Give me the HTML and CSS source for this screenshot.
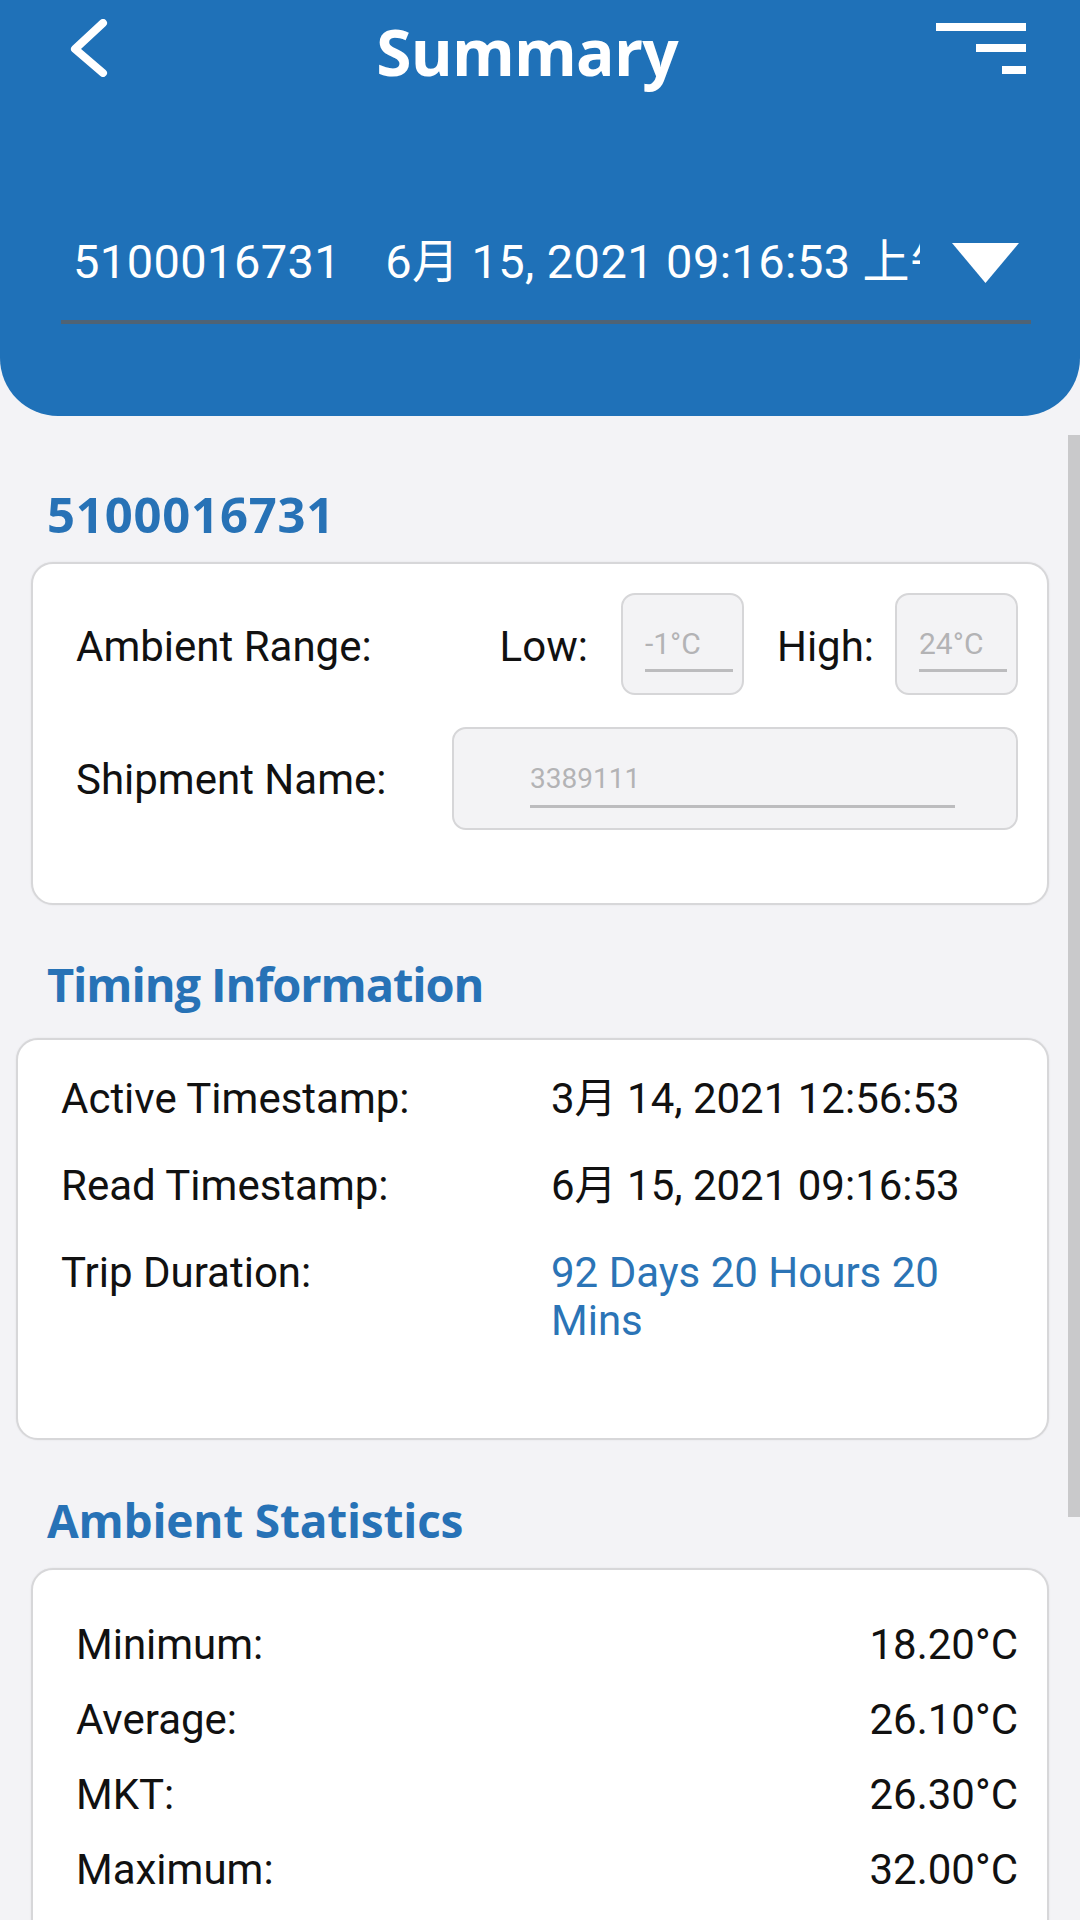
FILE: index.html
```html
<!DOCTYPE html>
<html lang="en">
<head>
<meta charset="utf-8">
<title>Summary</title>
<link rel="stylesheet" href="styles.css">
</head>
<body>
<div class="screen">
  <header class="header">
    <div class="topbar">
      <svg class="back" width="40" height="58" viewBox="0 0 40 58" aria-label="Back">
        <polyline points="33,4 5,30 33,54" fill="none" stroke="#fff" stroke-width="8" stroke-linecap="round" stroke-linejoin="round"/>
      </svg>
      <h1 class="title">Summary</h1>
      <svg class="menu" width="90" height="51" viewBox="0 0 90 51" aria-label="Menu">
        <rect x="0" y="0" width="90" height="8" fill="#fff"/>
        <rect x="40" y="21" width="50" height="8" fill="#fff"/>
        <rect x="66" y="43" width="24" height="8" fill="#fff"/>
      </svg>
    </div>
    <div class="picker">
      <div class="picker-text"><span class="picker-id">5100016731</span><span class="picker-date">6月 15, 2021 09:16:53 上午</span></div>
      <svg class="caret" width="67" height="40" viewBox="0 0 67 40"><polygon points="0,0 67,0 33.5,40" fill="#fff"/></svg>
    </div>
  </header>

  <main class="content">
    <h2 class="section-title first">5100016731</h2>
    <section class="card card-settings">
      <div class="range-row">
        <span class="label range-label">Ambient Range:</span>
        <span class="label low-label">Low:</span>
        <div class="box small"><div class="field">-1°C</div></div>
        <span class="label high-label">High:</span>
        <div class="box small"><div class="field">24°C</div></div>
      </div>
      <div class="name-row">
        <span class="label name-label">Shipment Name:</span>
        <div class="box wide"><div class="field">3389111</div></div>
      </div>
    </section>

    <h2 class="section-title second">Timing Information</h2>
    <section class="card card-timing">
      <span class="label">Active Timestamp:</span><span class="value">3月 14, 2021 12:56:53</span>
      <span class="label">Read Timestamp:</span><span class="value">6月 15, 2021 09:16:53</span>
      <span class="label">Trip Duration:</span><span class="value accent">92 Days 20 Hours 20 Mins</span>
    </section>

    <h2 class="section-title third">Ambient Statistics</h2>
    <section class="card card-stats">
      <div class="stat"><span class="label">Minimum:</span><span class="value">18.20°C</span></div>
      <div class="stat"><span class="label">Average:</span><span class="value">26.10°C</span></div>
      <div class="stat"><span class="label">MKT:</span><span class="value">26.30°C</span></div>
      <div class="stat"><span class="label">Maximum:</span><span class="value">32.00°C</span></div>
    </section>
  </main>
  <div class="scrollbar"></div>
</div>
</body>
</html>
```

FILE: styles.css
```css
* { box-sizing: border-box; }
html, body {
  margin: 0;
  padding: 0;
  overflow: hidden;
  background: #f3f3f6;
}
body {
  font-family: Roboto, "Noto Sans CJK SC", sans-serif;
  color: #111;
}
.screen {
  position: relative;
  width: 1080px;
  height: 1920px;
  overflow: hidden;
  background: #f3f3f6;
}

/* Header */
.header {
  height: 416px;
  background: #1f71b8;
  border-radius: 0 0 58px 58px;
  padding-top: 19px;
}
.topbar {
  display: flex;
  align-items: flex-start;
  height: 65px;
}
.back {
  display: block;
  margin-left: 70px;
  flex: none;
}
.title {
  flex: 1;
  margin: 1px 0 0;
  padding-left: 8px;
  text-align: center;
  font-family: "Open Sans", sans-serif;
  font-weight: 700;
  font-size: 64px;
  line-height: 64px;
  color: #fff;
  letter-spacing: -0.8px;
}
.menu {
  display: block;
  flex: none;
  margin: 4px 54px 0 0;
}
.picker {
  display: flex;
  align-items: center;
  margin: 150px 49px 0 61px;
  padding: 0 12px 30px 12px;
  border-bottom: 4px solid #4f6375;
}
.picker-text {
  flex: 1;
  overflow: hidden;
  white-space: nowrap;
  font-size: 47px;
  line-height: 56px;
  letter-spacing: 0.4px;
  color: #fff;
}
.picker-date {
  margin-left: 44px;
}
.caret {
  display: block;
  flex: none;
  margin-left: 32px;
  margin-top: 2px;
}

/* Content */
.content {
  padding: 0 31px;
}
.section-title {
  margin: 0;
  padding-left: 16px;
  font-family: "Open Sans", sans-serif;
  font-weight: 700;
  font-size: 47px;
  line-height: 47px;
  color: #2772b6;
}
.section-title.first { margin-top: 75px; margin-bottom: 24px; font-size: 49px; letter-spacing: 0.8px; }
.section-title.second { margin-top: 56px; margin-bottom: 30px; letter-spacing: -1.1px; }
.section-title.third { margin-top: 57px; margin-bottom: 24px; font-size: 46px; letter-spacing: -0.2px; }

.card {
  background: #fff;
  border: 2px solid #d7d7d9;
  border-radius: 22px;
  box-shadow: 0 0 2px rgba(0, 0, 0, 0.08);
}
.label, .value {
  font-size: 42px;
  line-height: 48px;
}

/* Card 1 */
.card-settings {
  height: 343px;
  padding: 29px 29px 0 43px;
}
.range-row {
  display: flex;
  align-items: center;
  height: 102px;
}
.range-label { flex: 1; padding-top: 5px; }
.low-label { margin-right: 33px; padding-top: 5px; }
.high-label { margin: 0 21px 0 33px; padding-top: 5px; }
.name-row {
  display: flex;
  align-items: center;
  margin-top: 32px;
  height: 103px;
}
.name-label { width: 376px; flex: none; padding-top: 3px; }
.box {
  background: #f3f3f5;
  border: 2px solid #d6d6d8;
  border-radius: 14px;
  height: 100%;
}
.box.small {
  width: 123px;
  flex: none;
  padding: 32px 9px 0 22px;
}
.box.wide {
  flex: 1;
  padding: 33px 61px 0 76px;
}
.field {
  color: #b3b3b5;
  border-bottom: 3px solid #bcbcbe;
}
.box.small .field {
  font-size: 30px;
  line-height: 34px;
  padding-bottom: 8px;
}
.box.wide .field {
  font-size: 28px;
  line-height: 33px;
  padding-bottom: 10px;
}

/* Card 2 */
.card-timing {
  margin-left: -15px;
  display: grid;
  grid-template-columns: 490px 1fr;
  row-gap: 39px;
  padding: 35px 52px 93px 43px;
}
.value.accent { color: #2b74b6; }

/* Card 3 */
.card-stats {
  display: flex;
  flex-direction: column;
  gap: 27px;
  padding: 51px 29px 60px 43px;
}
.stat {
  display: flex;
  justify-content: space-between;
}

/* Scroll indicator */
.scrollbar {
  position: absolute;
  right: 0;
  top: 435px;
  width: 12px;
  height: 1082px;
  background: #c9c9cb;
}
```
